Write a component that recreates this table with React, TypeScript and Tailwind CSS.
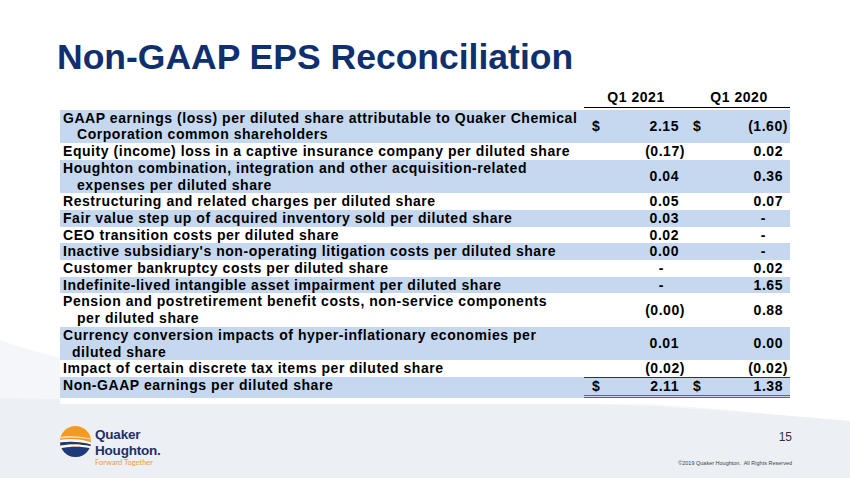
import type { ReactNode } from 'react'

type Kind = 'paren' | 'num' | 'dash'

interface Row {
  label: string
  cont?: string
  indent?: string
  q1: string
  q2: string
  dollar?: boolean
  blue?: boolean
  total?: boolean
}

const rows: Row[] = [
  {
    label: 'GAAP earnings (loss) per diluted share attributable to Quaker Chemical',
    cont: 'Corporation common shareholders',
    q1: '2.15',
    q2: '(1.60)',
    dollar: true,
    blue: true,
  },
  { label: 'Equity (income) loss in a captive insurance company per diluted share', q1: '(0.17)', q2: '0.02' },
  {
    label: 'Houghton combination, integration and other acquisition-related',
    cont: 'expenses per diluted share',
    q1: '0.04',
    q2: '0.36',
    blue: true,
  },
  { label: 'Restructuring and related charges per diluted share', q1: '0.05', q2: '0.07' },
  { label: 'Fair value step up of acquired inventory sold per diluted share', q1: '0.03', q2: '-', blue: true },
  { label: 'CEO transition costs per diluted share', q1: '0.02', q2: '-' },
  { label: "Inactive subsidiary's non-operating litigation costs per diluted share", q1: '0.00', q2: '-', blue: true },
  { label: 'Customer bankruptcy costs per diluted share', q1: '-', q2: '0.02' },
  { label: 'Indefinite-lived intangible asset impairment per diluted share', q1: '-', q2: '1.65', blue: true },
  {
    label: 'Pension and postretirement benefit costs, non-service components',
    cont: 'per diluted share',
    q1: '(0.00)',
    q2: '0.88',
  },
  {
    label: 'Currency conversion impacts of hyper-inflationary economies per',
    cont: 'diluted share',
    indent: 'pl-[9px]',
    q1: '0.01',
    q2: '0.00',
    blue: true,
  },
  { label: 'Impact of certain discrete tax items per diluted share', q1: '(0.02)', q2: '(0.02)' },
  { label: 'Non-GAAP earnings per diluted share', q1: '2.11', q2: '1.38', dollar: true, blue: true, total: true },
]

function kindOf(v: string): Kind {
  if (v === '-') return 'dash'
  if (v.startsWith('(')) return 'paren'
  return 'num'
}

function Value({ value, dollar, first }: { value: string; dollar?: boolean; first: boolean }) {
  const kind = kindOf(value)
  // accounting format: positive numbers leave room for the closing paren, dashes sit further in
  const pad = first
    ? kind === 'paren'
      ? 'pr-[3px]'
      : kind === 'num'
        ? 'pr-[9px]'
        : 'pr-[24px]'
    : kind === 'paren'
      ? 'pr-[2px]'
      : kind === 'num'
        ? 'pr-[7px]'
        : 'pr-[24px]'
  return (
    <div className={`flex h-full items-center justify-between ${first ? 'pl-[8px]' : 'pl-[5px]'} ${pad}`}>
      <span>{dollar ? '$' : ''}</span>
      <span>{value}</span>
    </div>
  )
}

function TableRow({ row }: { row: Row }) {
  const bg = row.blue ? 'bg-[#c6d8ef]' : 'bg-white'
  const valueBorder = row.total ? 'border-t border-b-[3px] border-t-[#333] border-b-[#666] border-double' : ''
  return (
    <div className={`grid grid-cols-[524px_104px_102px] ${bg}`}>
      <div className="pl-[3px]">
        <div className="whitespace-nowrap">{row.label}</div>
        {row.cont && <div className={`whitespace-nowrap ${row.indent ?? 'pl-[14px]'}`}>{row.cont}</div>}
      </div>
      <div className={valueBorder}>
        <Value value={row.q1} dollar={row.dollar} first />
      </div>
      <div className={valueBorder}>
        <Value value={row.q2} dollar={row.dollar} first={false} />
      </div>
    </div>
  )
}

function Logo(): ReactNode {
  return (
    <div className="flex items-start gap-[4px]">
      <svg width="31" height="31" viewBox="0 0 32 32" className="-mt-[1px]">
        <defs>
          <clipPath id="qh-circle">
            <circle cx="16" cy="16" r="16" />
          </clipPath>
        </defs>
        <g clipPath="url(#qh-circle)">
          <rect x="0" y="0" width="32" height="32" fill="#f39a22" />
          <path d="M0 11.5 C9 9.5 21 10.5 32 13 L32 14 C21 12 9 11.5 0 13 Z" fill="#fbd7a3" />
          <path d="M0 14.5 C9 12.5 21 13.5 32 16.5 L32 19 C21 16 10 15.5 0 17 Z" fill="#ffffff" />
          <path d="M0 17 C10 15.5 21 16 32 19 L32 21 C21 18.5 10 18.5 0 20.5 Z" fill="#1c3a7c" />
          <path d="M0 20.5 C10 18.5 21 18.5 32 21 L32 23 C21 20.5 10 21 0 23 Z" fill="#ffffff" />
          <path d="M0 23 C10 21 21 20.5 32 23 L32 32 L0 32 Z" fill="#1c3a7c" />
        </g>
      </svg>
      <div className="flex flex-col text-[#1c2f6c]">
        <span className="text-[13.5px] font-bold leading-[15.5px] tracking-[-0.2px]">Quaker</span>
        <span className="text-[13.5px] font-bold leading-[15.5px] tracking-[-0.2px]">Houghton.</span>
        <span className="font-['Lato',sans-serif] text-[7.5px] leading-[9px] text-[#ef9a3a]">Forward Together</span>
      </div>
    </div>
  )
}

export default function App() {
  return (
    <div className="relative h-[478px] w-[850px] overflow-hidden bg-white font-['Liberation_Sans',Arial,sans-serif]">
      {/* slide background swoosh */}
      <svg className="absolute inset-0" width="850" height="478" viewBox="0 0 850 478">
        <path d="M0 340 C120 385 350 394 560 400 C680 404 760 412 850 424 L850 478 L0 478 Z" fill="#f4f6f9" />
        <path d="M0 398 C200 402 450 400 620 405 C720 409 790 416 850 421 L850 478 L0 478 Z" fill="#ecEff4" />
      </svg>

      <div className="relative flex h-full flex-col">
        <h1 className="ml-[57px] mt-[35px] text-[35.5px] font-bold leading-[44px] text-[#0f2f6e]">
          Non-GAAP EPS Reconciliation
        </h1>

        {/* reconciliation table */}
        <div className="ml-[60px] mt-[10px] w-[730px] bg-white pb-[6px] text-[14px] font-bold leading-[16.7px] tracking-[0.55px] text-black">
          <div className="grid grid-cols-[524px_104px_102px]">
            <div />
            <div className="border-b-[1.5px] border-black pb-[1px] text-center">Q1 2021</div>
            <div className="border-b-[1.5px] border-black pb-[1px] text-center">Q1 2020</div>
          </div>
          <div className="mt-[2px]">
            {rows.map((row, i) => (
              <TableRow key={i} row={row} />
            ))}
          </div>
        </div>

        {/* footer */}
        <div className="mt-auto flex items-end justify-between pb-[11px] pl-[60px] pr-[58px]">
          <Logo />
          <div className="flex flex-col items-end">
            <span className="text-[12px] leading-[14px] text-[#333]">15</span>
            <span className="mt-[16px] text-[5.5px] leading-[7px] text-[#444]">
              ©2019 Quaker Houghton.&nbsp; All Rights Reserved
            </span>
          </div>
        </div>
      </div>
    </div>
  )
}
